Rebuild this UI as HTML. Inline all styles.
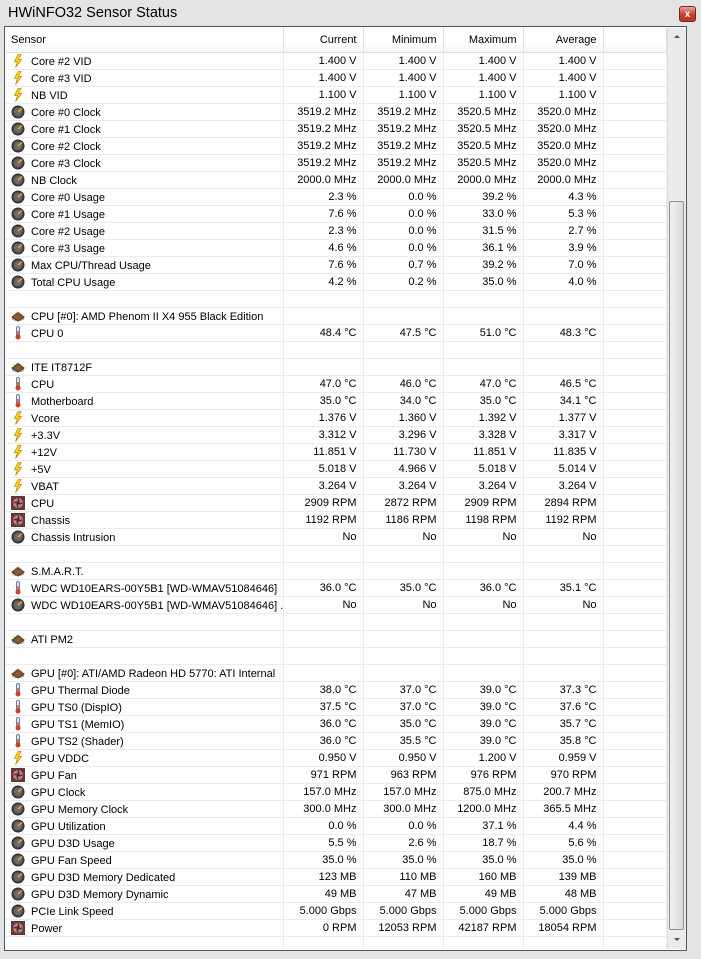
<!DOCTYPE html>
<html><head><meta charset="utf-8"><style>
html,body{margin:0;padding:0;}
body{width:701px;height:959px;background:#e4e4e4;position:relative;overflow:hidden;font-family:"Liberation Sans","DejaVu Sans",sans-serif;font-size:11px;color:#000;}
.title{position:absolute;left:8px;top:5px;font-size:14.5px;color:#000;}
.close{position:absolute;left:679px;top:6px;width:17px;height:16px;border:1px solid #6b2a22;border-radius:3px;background:linear-gradient(#e9a99c,#c7452f 50%,#b83420);color:#fff;font-size:10px;font-weight:bold;text-align:center;line-height:15px;box-sizing:border-box;}
.frame{position:absolute;left:4px;top:26px;width:683px;height:925px;border:1px solid #555;background:#fff;box-sizing:border-box;}
.list{position:absolute;left:1px;top:1px;width:661px;height:921px;overflow:hidden;}
table{border-collapse:collapse;table-layout:fixed;width:660px;}
td,th{height:16px;border-bottom:1px solid #ececec;border-right:1px solid #ececec;padding:0 6px 0 0;text-align:right;white-space:nowrap;overflow:hidden;font-weight:normal;}
th{height:24px;border-bottom:1px solid #e0e0e0;border-right:1px solid #e0e0e0;background:linear-gradient(#fff,#fff 60%,#f4f5f7);}
th.s{text-align:left;padding-left:5px;}
td.s{text-align:left;padding-left:5px;}
td.s svg{vertical-align:-3px;margin-right:6px;width:14px;height:14px;}
.sb{position:absolute;left:662px;top:1px;width:18px;height:921px;background:#ebebeb;border-left:1px solid #dedede;}
.thumb{position:absolute;left:1px;top:173px;width:15px;height:729px;border:1px solid #8e8f8f;border-radius:2px;background:linear-gradient(90deg,#f0f0f0,#dcdcdc);box-sizing:border-box;}
.au,.ad{position:absolute;left:6px;width:0;height:0;border-left:3px solid transparent;border-right:3px solid transparent;}
.au{top:7px;border-bottom:3px solid #555;}
.ad{top:910px;border-top:3px solid #555;}
</style></head><body>
<svg width="0" height="0" style="position:absolute">
<defs>
<symbol id="v" viewBox="0 0 14 14"><path d="M7 0.5 L3.5 7.5 L6.5 7.5 L4.5 13.5 L10.5 5.5 L7.5 5.5 L10 0.5Z" fill="#ffd52a" stroke="#c88a00" stroke-width="0.8"/></symbol>
<symbol id="g" viewBox="0 0 14 14"><circle cx="7" cy="7" r="6" fill="#4a4a4a" stroke="#2a2a2a"/><circle cx="7" cy="7" r="4" fill="#6a6a6a"/><path d="M7 7 L11 3.5" stroke="#f0a030" stroke-width="1.6"/></symbol>
<symbol id="t" viewBox="0 0 14 14"><rect x="5.5" y="0.5" width="3" height="10" rx="1.5" fill="#e8e8f0" stroke="#7080a0"/><circle cx="7" cy="11" r="2.5" fill="#d04020"/><rect x="6.3" y="5" width="1.4" height="6" fill="#d04020"/></symbol>
<symbol id="f" viewBox="0 0 14 14"><rect x="0.5" y="0.5" width="13" height="13" fill="#7a3030" stroke="#444"/><circle cx="7" cy="7" r="5" fill="#c88080"/><circle cx="7" cy="7" r="1.6" fill="#333"/><path d="M7 2.5 L8 6 M11.5 7 L8 8 M7 11.5 L6 8 M2.5 7 L6 6" stroke="#333" stroke-width="1.4"/></symbol>
<symbol id="c" viewBox="0 0 14 14"><path d="M1 8 L7 4 L13 8 L7 12Z" fill="#8a5a30" stroke="#4a3020"/><path d="M3 6 L7 3 L11 6" fill="none" stroke="#b08050"/><path d="M2 9 v2 M4 10 v2 M10 10 v2 M12 9 v2" stroke="#555"/></symbol>
</defs></svg>
<div class="title">HWiNFO32 Sensor Status</div>
<div class="close">x</div>
<div class="frame">
<div class="list">
<table>
<colgroup><col style="width:277px"><col style="width:80px"><col style="width:80px"><col style="width:80px"><col style="width:80px"><col style="width:63px"></colgroup>
<tr><th class="s">Sensor</th><th>Current</th><th>Minimum</th><th>Maximum</th><th>Average</th><th></th></tr>
<tr><td class="s"><svg><use href="#v"/></svg>Core #2 VID</td><td>1.400 V</td><td>1.400 V</td><td>1.400 V</td><td>1.400 V</td><td></td></tr>
<tr><td class="s"><svg><use href="#v"/></svg>Core #3 VID</td><td>1.400 V</td><td>1.400 V</td><td>1.400 V</td><td>1.400 V</td><td></td></tr>
<tr><td class="s"><svg><use href="#v"/></svg>NB VID</td><td>1.100 V</td><td>1.100 V</td><td>1.100 V</td><td>1.100 V</td><td></td></tr>
<tr><td class="s"><svg><use href="#g"/></svg>Core #0 Clock</td><td>3519.2 MHz</td><td>3519.2 MHz</td><td>3520.5 MHz</td><td>3520.0 MHz</td><td></td></tr>
<tr><td class="s"><svg><use href="#g"/></svg>Core #1 Clock</td><td>3519.2 MHz</td><td>3519.2 MHz</td><td>3520.5 MHz</td><td>3520.0 MHz</td><td></td></tr>
<tr><td class="s"><svg><use href="#g"/></svg>Core #2 Clock</td><td>3519.2 MHz</td><td>3519.2 MHz</td><td>3520.5 MHz</td><td>3520.0 MHz</td><td></td></tr>
<tr><td class="s"><svg><use href="#g"/></svg>Core #3 Clock</td><td>3519.2 MHz</td><td>3519.2 MHz</td><td>3520.5 MHz</td><td>3520.0 MHz</td><td></td></tr>
<tr><td class="s"><svg><use href="#g"/></svg>NB Clock</td><td>2000.0 MHz</td><td>2000.0 MHz</td><td>2000.0 MHz</td><td>2000.0 MHz</td><td></td></tr>
<tr><td class="s"><svg><use href="#g"/></svg>Core #0 Usage</td><td>2.3 %</td><td>0.0 %</td><td>39.2 %</td><td>4.3 %</td><td></td></tr>
<tr><td class="s"><svg><use href="#g"/></svg>Core #1 Usage</td><td>7.6 %</td><td>0.0 %</td><td>33.0 %</td><td>5.3 %</td><td></td></tr>
<tr><td class="s"><svg><use href="#g"/></svg>Core #2 Usage</td><td>2.3 %</td><td>0.0 %</td><td>31.5 %</td><td>2.7 %</td><td></td></tr>
<tr><td class="s"><svg><use href="#g"/></svg>Core #3 Usage</td><td>4.6 %</td><td>0.0 %</td><td>36.1 %</td><td>3.9 %</td><td></td></tr>
<tr><td class="s"><svg><use href="#g"/></svg>Max CPU/Thread Usage</td><td>7.6 %</td><td>0.7 %</td><td>39.2 %</td><td>7.0 %</td><td></td></tr>
<tr><td class="s"><svg><use href="#g"/></svg>Total CPU Usage</td><td>4.2 %</td><td>0.2 %</td><td>35.0 %</td><td>4.0 %</td><td></td></tr>
<tr><td class="s"></td><td></td><td></td><td></td><td></td><td></td></tr>
<tr><td class="s"><svg><use href="#c"/></svg>CPU [#0]: AMD Phenom II X4 955 Black Edition</td><td></td><td></td><td></td><td></td><td></td></tr>
<tr><td class="s"><svg><use href="#t"/></svg>CPU 0</td><td>48.4 °C</td><td>47.5 °C</td><td>51.0 °C</td><td>48.3 °C</td><td></td></tr>
<tr><td class="s"></td><td></td><td></td><td></td><td></td><td></td></tr>
<tr><td class="s"><svg><use href="#c"/></svg>ITE IT8712F</td><td></td><td></td><td></td><td></td><td></td></tr>
<tr><td class="s"><svg><use href="#t"/></svg>CPU</td><td>47.0 °C</td><td>46.0 °C</td><td>47.0 °C</td><td>46.5 °C</td><td></td></tr>
<tr><td class="s"><svg><use href="#t"/></svg>Motherboard</td><td>35.0 °C</td><td>34.0 °C</td><td>35.0 °C</td><td>34.1 °C</td><td></td></tr>
<tr><td class="s"><svg><use href="#v"/></svg>Vcore</td><td>1.376 V</td><td>1.360 V</td><td>1.392 V</td><td>1.377 V</td><td></td></tr>
<tr><td class="s"><svg><use href="#v"/></svg>+3.3V</td><td>3.312 V</td><td>3.296 V</td><td>3.328 V</td><td>3.317 V</td><td></td></tr>
<tr><td class="s"><svg><use href="#v"/></svg>+12V</td><td>11.851 V</td><td>11.730 V</td><td>11.851 V</td><td>11.835 V</td><td></td></tr>
<tr><td class="s"><svg><use href="#v"/></svg>+5V</td><td>5.018 V</td><td>4.966 V</td><td>5.018 V</td><td>5.014 V</td><td></td></tr>
<tr><td class="s"><svg><use href="#v"/></svg>VBAT</td><td>3.264 V</td><td>3.264 V</td><td>3.264 V</td><td>3.264 V</td><td></td></tr>
<tr><td class="s"><svg><use href="#f"/></svg>CPU</td><td>2909 RPM</td><td>2872 RPM</td><td>2909 RPM</td><td>2894 RPM</td><td></td></tr>
<tr><td class="s"><svg><use href="#f"/></svg>Chassis</td><td>1192 RPM</td><td>1186 RPM</td><td>1198 RPM</td><td>1192 RPM</td><td></td></tr>
<tr><td class="s"><svg><use href="#g"/></svg>Chassis Intrusion</td><td>No</td><td>No</td><td>No</td><td>No</td><td></td></tr>
<tr><td class="s"></td><td></td><td></td><td></td><td></td><td></td></tr>
<tr><td class="s"><svg><use href="#c"/></svg>S.M.A.R.T.</td><td></td><td></td><td></td><td></td><td></td></tr>
<tr><td class="s"><svg><use href="#t"/></svg>WDC WD10EARS-00Y5B1 [WD-WMAV51084646]</td><td>36.0 °C</td><td>35.0 °C</td><td>36.0 °C</td><td>35.1 °C</td><td></td></tr>
<tr><td class="s"><svg><use href="#g"/></svg>WDC WD10EARS-00Y5B1 [WD-WMAV51084646] ...</td><td>No</td><td>No</td><td>No</td><td>No</td><td></td></tr>
<tr><td class="s"></td><td></td><td></td><td></td><td></td><td></td></tr>
<tr><td class="s"><svg><use href="#c"/></svg>ATI PM2</td><td></td><td></td><td></td><td></td><td></td></tr>
<tr><td class="s"></td><td></td><td></td><td></td><td></td><td></td></tr>
<tr><td class="s"><svg><use href="#c"/></svg>GPU [#0]: ATI/AMD Radeon HD 5770: ATI Internal</td><td></td><td></td><td></td><td></td><td></td></tr>
<tr><td class="s"><svg><use href="#t"/></svg>GPU Thermal Diode</td><td>38.0 °C</td><td>37.0 °C</td><td>39.0 °C</td><td>37.3 °C</td><td></td></tr>
<tr><td class="s"><svg><use href="#t"/></svg>GPU TS0 (DispIO)</td><td>37.5 °C</td><td>37.0 °C</td><td>39.0 °C</td><td>37.6 °C</td><td></td></tr>
<tr><td class="s"><svg><use href="#t"/></svg>GPU TS1 (MemIO)</td><td>36.0 °C</td><td>35.0 °C</td><td>39.0 °C</td><td>35.7 °C</td><td></td></tr>
<tr><td class="s"><svg><use href="#t"/></svg>GPU TS2 (Shader)</td><td>36.0 °C</td><td>35.5 °C</td><td>39.0 °C</td><td>35.8 °C</td><td></td></tr>
<tr><td class="s"><svg><use href="#v"/></svg>GPU VDDC</td><td>0.950 V</td><td>0.950 V</td><td>1.200 V</td><td>0.959 V</td><td></td></tr>
<tr><td class="s"><svg><use href="#f"/></svg>GPU Fan</td><td>971 RPM</td><td>963 RPM</td><td>976 RPM</td><td>970 RPM</td><td></td></tr>
<tr><td class="s"><svg><use href="#g"/></svg>GPU Clock</td><td>157.0 MHz</td><td>157.0 MHz</td><td>875.0 MHz</td><td>200.7 MHz</td><td></td></tr>
<tr><td class="s"><svg><use href="#g"/></svg>GPU Memory Clock</td><td>300.0 MHz</td><td>300.0 MHz</td><td>1200.0 MHz</td><td>365.5 MHz</td><td></td></tr>
<tr><td class="s"><svg><use href="#g"/></svg>GPU Utilization</td><td>0.0 %</td><td>0.0 %</td><td>37.1 %</td><td>4.4 %</td><td></td></tr>
<tr><td class="s"><svg><use href="#g"/></svg>GPU D3D Usage</td><td>5.5 %</td><td>2.6 %</td><td>18.7 %</td><td>5.6 %</td><td></td></tr>
<tr><td class="s"><svg><use href="#g"/></svg>GPU Fan Speed</td><td>35.0 %</td><td>35.0 %</td><td>35.0 %</td><td>35.0 %</td><td></td></tr>
<tr><td class="s"><svg><use href="#g"/></svg>GPU D3D Memory Dedicated</td><td>123 MB</td><td>110 MB</td><td>160 MB</td><td>139 MB</td><td></td></tr>
<tr><td class="s"><svg><use href="#g"/></svg>GPU D3D Memory Dynamic</td><td>49 MB</td><td>47 MB</td><td>49 MB</td><td>48 MB</td><td></td></tr>
<tr><td class="s"><svg><use href="#g"/></svg>PCIe Link Speed</td><td>5.000 Gbps</td><td>5.000 Gbps</td><td>5.000 Gbps</td><td>5.000 Gbps</td><td></td></tr>
<tr><td class="s"><svg><use href="#f"/></svg>Power</td><td>0 RPM</td><td>12053 RPM</td><td>42187 RPM</td><td>18054 RPM</td><td></td></tr>
<tr><td class="s"></td><td></td><td></td><td></td><td></td><td></td></tr>
</table>
</div>
<div class="sb"><div class="au"></div><div class="thumb"></div><div class="ad"></div></div>
</div>
</body></html>
